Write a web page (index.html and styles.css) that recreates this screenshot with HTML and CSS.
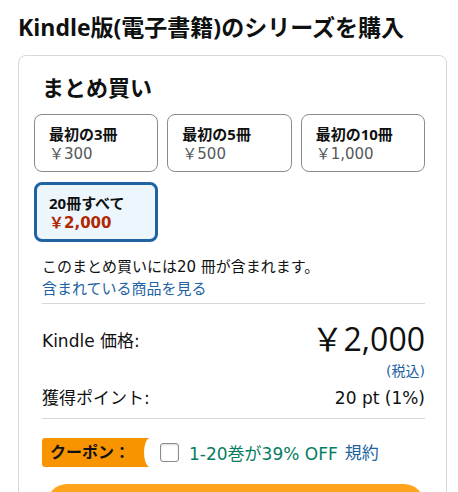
FILE: index.html
```html
<!DOCTYPE html>
<html lang="ja">
<head>
  <meta charset="UTF-8" />
  <meta name="viewport" content="width=device-width, initial-scale=1.0"/>
  <title>Kindle版(電子書籍)のシリーズを購入</title>
  <link rel="stylesheet" href="styles.css">
</head>
<body>

  <h2 class="page-title">Kindle版(電子書籍)のシリーズを購入</h2>

  <section class="bundle-card">
    <h3 class="bundle-title">まとめ買い</h3>

    <!-- bundle size options -->
    <div class="options">
      <button class="option">
        <span class="option-name">最初の3冊</span>
        <span class="option-price">￥300</span>
      </button>
      <button class="option">
        <span class="option-name">最初の5冊</span>
        <span class="option-price">￥500</span>
      </button>
      <button class="option">
        <span class="option-name">最初の10冊</span>
        <span class="option-price">￥1,000</span>
      </button>
      <button class="option selected">
        <span class="option-name">20冊すべて</span>
        <span class="option-price">￥2,000</span>
      </button>
    </div>

    <p class="bundle-note">このまとめ買いには20 冊が含まれます。</p>
    <a class="link" href="#">含まれている商品を見る</a>

    <div class="price-block">
      <div class="price-row">
        <span class="label">Kindle 価格:</span>
        <span class="big-price">￥2,000</span>
      </div>
      <div class="tax">(税込)</div>
      <div class="price-row points">
        <span class="label">獲得ポイント:</span>
        <span>20 pt (1%)</span>
      </div>
    </div>

    <!-- coupon -->
    <div class="coupon">
      <span class="coupon-badge">クーポン：</span>
      <label class="coupon-check">
        <input type="checkbox">
        <span class="coupon-text">1-20巻が39% OFF</span>
        <a class="link" href="#">規約</a>
      </label>
    </div>

    <button class="buy-btn">今すぐ買う</button>
  </section>

</body>
</html>
```

FILE: styles.css
```css
* {
  margin: 0;
  padding: 0;
  box-sizing: border-box;
}

html, body {
  height: 100%;
  overflow: hidden;
}

body {
  font-family: "DejaVu Sans", "Noto Sans CJK JP", sans-serif;
  color: #0f1111;
  background: #fff;
  padding: 0 11px 0 18px;
}

.page-title,
.bundle-title,
.option-name,
.big-price {
  font-family: "Open Sans", "Noto Sans CJK JP", sans-serif;
}

.page-title {
  font-size: 23px;
  font-weight: bold;
  line-height: 30px;
  padding-top: 12px;
  margin-bottom: 13px;
}

.bundle-card {
  border: 1px solid #d5d9d9;
  border-radius: 8px;
  padding: 15px 21px 0 23px;
  height: 460px;
}

.bundle-title {
  font-size: 22px;
  font-weight: bold;
  line-height: 32px;
  margin-bottom: 11px;
}

.options {
  display: grid;
  grid-template-columns: repeat(3, 1fr);
  gap: 10px 9px;
  margin-left: -8px;
}

.option {
  display: flex;
  flex-direction: column;
  align-items: flex-start;
  height: 58px;
  padding: 9px 14px 0;
  border: 1px solid #888c8c;
  border-radius: 8px;
  background: #fff;
  font-family: inherit;
  text-align: left;
  cursor: pointer;
}

.option-name {
  font-size: 15px;
  font-weight: bold;
  line-height: 20px;
  color: #0f1111;
}

.option-price {
  font-size: 15px;
  line-height: 21px;
  color: #565959;
}

.option.selected {
  height: 60px;
  padding: 8px 12px 0;
  border: 3px solid #2162a1;
  background: #edf6fd;
}

.option.selected .option-price {
  color: #b12704;
  font-weight: bold;
}

.bundle-note {
  font-size: 15px;
  line-height: 22px;
  margin-top: 14px;
}

.link {
  font-size: 15px;
  line-height: 22px;
  color: #2162a1;
  text-decoration: none;
}

.price-block {
  margin-top: 3px;
  border-top: 1px solid #d5d9d9;
  border-bottom: 1px solid #d5d9d9;
  padding: 15px 0 7px;
}

.price-row {
  display: flex;
  justify-content: space-between;
  align-items: center;
  font-size: 17px;
}

.big-price {
  font-size: 32px;
  line-height: 40px;
}

.tax {
  text-align: right;
  font-size: 14px;
  line-height: 20px;
  color: #2162a1;
  margin-top: 2px;
}

.points {
  line-height: 26px;
  margin-top: 4px;
}

.coupon {
  display: flex;
  align-items: center;
  gap: 10px;
  margin-top: 19px;
}

.coupon-badge {
  position: relative;
  display: inline-block;
  height: 29px;
  line-height: 29px;
  padding: 0 20px 0 8px;
  background: #f79400;
  border-radius: 3px 0 0 3px;
  font-size: 16px;
  font-weight: bold;
  color: #0f1111;
}

/* concave notch on the ribbon's right end */
.coupon-badge::after {
  content: '';
  position: absolute;
  top: 0;
  right: -6px;
  width: 12px;
  height: 29px;
  border-radius: 50%;
  background: #fff;
}

.coupon-check {
  display: flex;
  align-items: center;
  gap: 10px;
  font-size: 17px;
}

.coupon-check input {
  appearance: none;
  width: 19px;
  height: 19px;
  border: 1px solid #888c8c;
  border-radius: 3px;
  background: #fff;
  box-shadow: 0 1px 2px rgba(15, 17, 17, 0.15) inset;
}

.coupon-text {
  color: #067d62;
}

.coupon-check .link {
  font-size: 17px;
  margin-left: -3px;
}

.buy-btn {
  display: block;
  width: 377px;
  height: 40px;
  margin-top: 17px;
  margin-left: 5px;
  border: none;
  border-radius: 20px;
  background: #ffa41c;
  font-family: inherit;
  font-size: 16px;
  color: #0f1111;
}
```
